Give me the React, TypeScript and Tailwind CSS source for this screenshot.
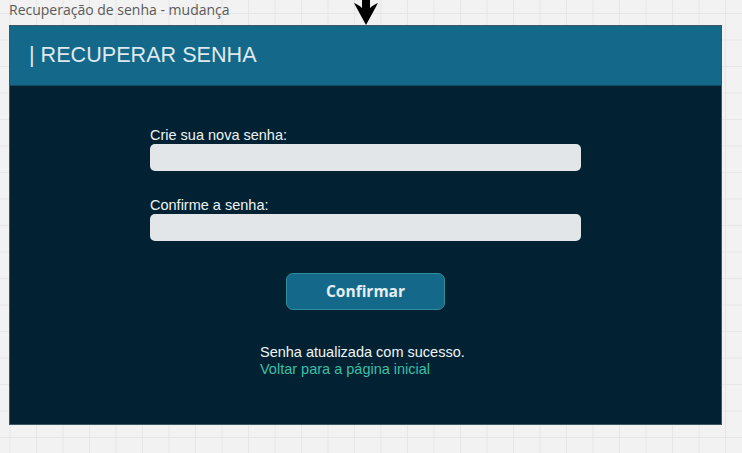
import React from "react";

export default function App() {
  return (
    <div
      className="relative w-[742px] h-[453px] overflow-hidden bg-[#f2f2f2]"
      style={{
        backgroundImage:
          "linear-gradient(to right, #e6e6e6 1px, transparent 1px), linear-gradient(to bottom, #e6e6e6 1px, transparent 1px)",
        backgroundSize: "26.5px 26.5px",
        backgroundPosition: "9.5px 13px",
      }}
    >
      <div className="pl-[9px] h-[25px] text-[14px] leading-[20px] text-[#5a5a5a] font-['Open_Sans',sans-serif]">
        Recuperação de senha - mudança
      </div>
      <svg className="absolute left-[353px] top-[-2px]" width="26" height="27" viewBox="0 0 26 27">
        <path d="M9 0 H17 V10 C19 8 22 6 25 5 L13 27 L1 5 C4 6 7 8 9 10 Z" fill="#000" />
      </svg>
      <div className="ml-[9px] w-[713px] h-[400px] flex flex-col border border-[#3c5664] bg-[#022233] font-['Liberation_Sans',Arial,sans-serif]">
        <div className="h-[60px] shrink-0 bg-[#14698b] border-b border-[#0c4a63] flex items-center pl-[19px] text-[21.6px] text-[#dfe8ee]">
          | RECUPERAR SENHA
        </div>
        <div className="flex flex-col pl-[140px] pt-[40px]">
          <label className="text-[14.5px] leading-[18px] text-[#eef2f4]">Crie sua nova senha:</label>
          <div className="w-[431px] h-[27px] rounded-[5px] bg-[#e2e6e9]" />
          <label className="mt-[25px] text-[14.5px] leading-[18px] text-[#eef2f4]">Confirme a senha:</label>
          <div className="w-[431px] h-[27px] rounded-[5px] bg-[#e2e6e9]" />
          <div className="mt-[32px] ml-[136px] w-[159px] h-[37px] rounded-[7px] border border-[#2c8f9a] bg-[#14698b] flex items-center justify-center text-[15.5px] font-bold text-[#e6eef2] font-['Open_Sans',sans-serif]">
            Confirmar
          </div>
          <div className="mt-[34px] ml-[110px] text-[14.5px] leading-[17px]">
            <div className="text-[#f0f4f6]">Senha atualizada com sucesso.</div>
            <div className="text-[#3dbea6]">Voltar para a página inicial</div>
          </div>
        </div>
      </div>
    </div>
  );
}
